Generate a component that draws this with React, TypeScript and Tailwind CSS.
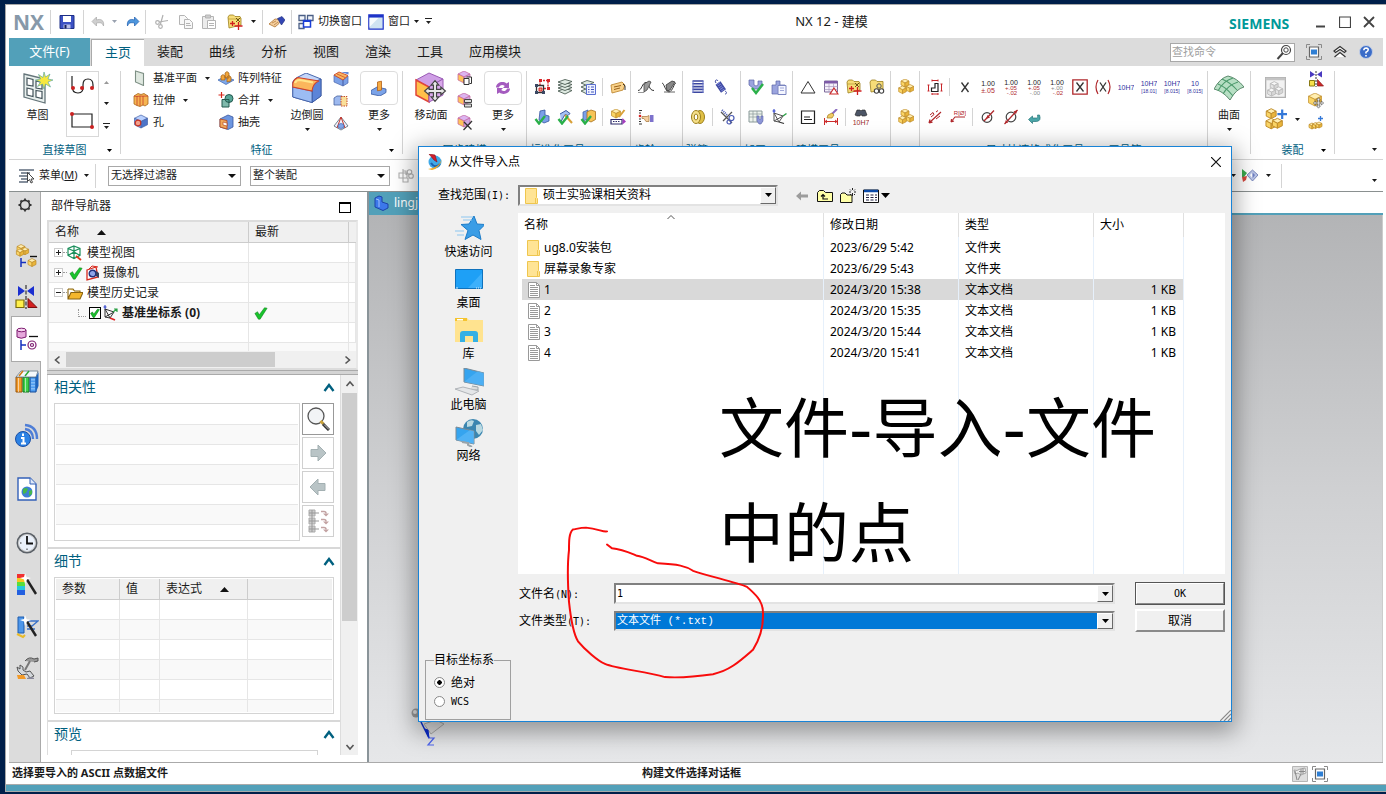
import React from "react";
import type { ReactNode } from "react";
import clsx from "clsx";

/* ---------- drawing helpers ---------- */

function Svg({ children, box = "0 0 16 16", className = "size-4" }: { children: ReactNode; box?: string; className?: string }) {
  return (
    <svg viewBox={box} className={clsx("shrink-0", className)} fill="none" aria-hidden="true">
      {children}
    </svg>
  );
}

const Caret = ({ className = "" }: { className?: string }) => (
  <Svg box="0 0 5 3" className={clsx("h-[3px] w-[5px]", className)}>
    <path d="M0 0h5L2.500 3z" fill="currentColor" />
  </Svg>
);

const OverflowCaret = () => (
  <Svg box="0 0 7 7" className="h-[7px] w-[7px]">
    <path d="M0 .5h7" stroke="#222" />
    <path d="M1 3h5L3.500 6z" fill="#222" />
  </Svg>
);

const Sep = ({ className = "h-6" }: { className?: string }) => <div className={clsx("w-px shrink-0 bg-[#d4d4d4]", className)} />;

/* isometric box: x,y is the top corner, r the half width */
function Cube({ x, y, r, t, l, f, s }: { x: number; y: number; r: number; t: string; l: string; f: string; s: string }) {
  const h = r / 2;
  return (
    <g stroke={s} strokeWidth="0.700" strokeLinejoin="round">
      <path d={`M${x} ${y}l${r} ${h}l${-r} ${h}l${-r} ${-h}z`} fill={t} />
      <path d={`M${x - r} ${y + h}l${r} ${h}v${r}l${-r} ${-h}z`} fill={l} />
      <path d={`M${x + r} ${y + h}l${-r} ${h}v${r}l${r} ${-h}z`} fill={f} />
    </g>
  );
}

const Gold = (p: { x: number; y: number; r: number }) => <Cube {...p} t="#ffeeb0" l="#fad566" f="#e9b53c" s="#bf8d2a" />;
const Blue = (p: { x: number; y: number; r: number }) => <Cube {...p} t="#b8d0ff" l="#7ba4ec" f="#4d74c8" s="#4562a8" />;
const Violet = (p: { x: number; y: number; r: number }) => <Cube {...p} t="#dcb4f0" l="#ffc45a" f="#d0a8e4" s="#c2609e" />;

const Move = ({ x, y, k = 1 }: { x: number; y: number; k?: number }) => (
  <path
    transform={`translate(${x} ${y}) scale(${k})`}
    d="M0-8l3 3.500H1.200v3.300h3.300V-3L8 0 4.500 3V1.200H1.200v3.300H3L0 8l-3-3.500h1.800V1.200h-3.300V3L-8 0l3.500-3v1.800h3.300v-3.300H-3z"
    fill="#e8e8e8"
    stroke="#444"
    strokeWidth="0.900"
  />
);
const Tick = ({ c = "#2ab04a" }: { c?: string }) => <path d="M1.500 10l3.500 4.500L11 7" stroke={c} strokeWidth="2.400" />;

/* small text used inside dimension glyphs */
const T = ({ x, y, c, s = 6, children }: { x: number; y: number; c: string; s?: number; children: string }) => (
  <text x={x} y={y} fill={c} fontSize={s} fontFamily="Liberation Sans, sans-serif" textAnchor="middle">
    {children}
  </text>
);

const icons: Record<string, ReactNode> = {
  save: (
    <>
      <path d="M1 1.500h14v13H1z" fill="#3c52c4" stroke="#1d2e86" />
      <path d="M4 2h8v6H4z" fill="#fff" />
      <path d="M4.500 10.500h7v4h-7z" fill="#b9c0e8" />
      <path d="M5.500 11h2v3.500h-2z" fill="#16205c" />
    </>
  ),
  undo: <path d="M2 8.500l4.500-4.500v3c4-1.500 8 0 7 6-1-3.300-3-3.700-7-3v3z" fill="#cfcfcf" stroke="#a9a9a9" strokeWidth="0.700" transform="translate(0 -1)" />,
  redo: <path d="M14 8.500L9.500 4v3c-4-1.500-8 0-7 6 1-3.300 3-3.700 7-3v3z" fill="#4e96dc" stroke="#1f5fb0" strokeWidth="0.700" transform="translate(0 -1)" />,
  cut: (
    <g stroke="#b0b0b0" strokeWidth="1.200">
      <path d="M9 1L6.500 10M14 6.500L5 8" />
      <circle cx="3.500" cy="8.500" r="1.800" />
      <circle cx="6.500" cy="12.500" r="1.800" />
    </g>
  ),
  copy: (
    <g stroke="#b4b4b4" fill="#f8f8f8">
      <path d="M1.500 1.500h5l3 3v6h-8z" />
      <path d="M6.500 5.500h5l3 3v6h-8z" />
      <path d="M8 9.500h4M8 11.500h5" />
    </g>
  ),
  paste: (
    <g stroke="#b4b4b4" fill="#ececec">
      <path d="M1.500 2.500h11v12h-11z" />
      <path d="M4.500 1h5v3h-5z" fill="#ccc" />
      <path d="M6.500 6.500h8v8h-8zM8 9.500h5M8 11.500h5" fill="#fff" />
    </g>
  ),
  folderStar: (
    <>
      <path d="M1 3l1.500-2h4L8 2.500h5l1 2V11L2 14z" fill="#f7dd78" stroke="#9c7f1c" strokeWidth="0.800" />
      <path d="M1 5h10l3-1" stroke="#b2932e" strokeWidth="0.700" />
      <path d="M9 4l4 4M13 4L9 8" stroke="#6b5412" />
      <path d="M11.500 8v8M7.500 12h8M5.500 7v5M3 9.500h5" stroke="#d01f1f" strokeWidth="1.300" />
    </>
  ),
  eraser: (
    <>
      <path d="M0 10l6-5 5 .5-1 4-4 3.500z" fill="#f4cfa0" stroke="#b0742e" strokeWidth="0.800" />
      <path d="M3 9l4-2M5 11l4-3" stroke="#b0742e" strokeWidth="0.700" />
      <path d="M8.500 4.500L13 2.500l3 3.500-3.500 5z" fill="#3346b4" stroke="#1b2a78" strokeWidth="0.600" />
    </>
  ),
  windows: (
    <>
      <path d="M1 1.500h6v5H1zM9.500 1.500H15v5H9.500zM1 9.500h5v5H1z" stroke="#4b5f86" strokeWidth="1.300" fill="#f3f6fb" />
      <path d="M5.500 6.500h7v6.500h-7z" fill="#fff" stroke="#1b3fd6" strokeWidth="1.500" />
      <path d="M5.500 7.500h7" stroke="#1b3fd6" />
    </>
  ),
  window: (
    <>
      <path d="M.8.800h14.400v14.400H.8z" fill="#cfe3f2" stroke="#1e33c8" strokeWidth="1.200" />
      <path d="M1 1h14v2.500H1z" fill="#1e33c8" />
      <path d="M1.500 4h9l-9 9z" fill="#fff" opacity=".8" />
    </>
  ),
  plane: <path d="M2.500 1l8 2.500v12L2.500 12z" fill="#dfe8e0" stroke="#7d8f84" strokeWidth="1.100" />,
  extrude: (
    <g stroke="#a8671c" strokeWidth="0.800">
      <path d="M1 4l4-2.500 3 1 3-1L15 4v8l-3 2-2-1-3 1.500-3-1L1 12z" fill="#f6b552" />
      <path d="M4 4.500v9M7 4v10M10 4v9M1 4l3 .5 3-.5 3 .2 5-.2" stroke="#c7402c" fill="none" />
    </g>
  ),
  hole: (
    <>
      <Blue x={8} y={1} r={6.500} />
      <circle cx="5" cy="9" r="2.800" fill="#f3a08c" stroke="#c93322" strokeWidth="1.200" />
    </>
  ),
  pattern: (
    <>
      <path d="M0 10l7-3.500L16 10l-8 4.500z" fill="#7ea9ec" stroke="#3b63ad" strokeWidth="0.700" />
      <path d="M3 10V6l2-1.500L7 6v4zM7 8V3l2-1.500L11 3v5zM9 12V7l2-1.500L13 7v4z" fill="#f3a63c" stroke="#9d5f14" strokeWidth="0.700" />
    </>
  ),
  unite: (
    <>
      <path d="M3.500 0v6M.5 3h6" stroke="#d6281c" strokeWidth="1.200" />
      <path d="M4 7.500h7V15H4z" fill="#7fb9ac" stroke="#23584e" />
      <circle cx="11" cy="6.500" r="4" fill="#56a596" stroke="#23584e" />
      <path d="M7.500 7.500h3.500v3" stroke="#23584e" />
    </>
  ),
  shell: (
    <>
      <path d="M2 5l8-4 5 2v10l-5 2.500-8-2.500z" fill="#6d96e0" stroke="#39559e" strokeWidth="0.800" />
      <path d="M2 5l7 1.500v8.500L2 13z" fill="#f0a95c" stroke="#b84b22" strokeWidth="0.900" />
      <path d="M5 8l4 1v3l-4-1z" fill="#fff" stroke="#b84b22" strokeWidth="0.700" />
    </>
  ),
  chamfer: (
    <>
      <path d="M1 4v7l9 4V9zM10 9l5-4v7l-5 3z" fill="#7ba0e6" stroke="#4a66ac" strokeWidth="0.700" />
      <path d="M1 4l5-3 9 3.500L10 9z" fill="#f9b65e" stroke="#cc4a2a" strokeWidth="0.900" />
      <path d="M4 3l8 3.500" stroke="#cc4a2a" strokeWidth="0.800" />
      <path d="M8 1h7.500v2.500z" fill="#5f87d8" />
    </>
  ),
  thread: (
    <>
      <path d="M1 5l3-2h5v9H1z" fill="#9db9ef" stroke="#48629f" strokeWidth="0.800" />
      <path d="M8 3.500h6v9.500H8z" fill="#fadf9a" stroke="#c34a2a" strokeDasharray="1.500 1" />
    </>
  ),
  draft: (
    <>
      <path d="M8 2L1 11l7 4 7-4z" fill="#eef3fd" stroke="#567" strokeWidth="0.800" />
      <path d="M8 2L4 13M8 2l4 11" stroke="#c8352a" />
      <ellipse cx="8" cy="11" rx="3" ry="2.500" fill="#7fa5ea" stroke="#39559e" strokeWidth="0.600" />
    </>
  ),
  faceCopy: (
    <>
      <Violet x={7} y={0} r={6} />
      <path d="M7 7.500h5v6H7zM9.500 6h5v6.500h-2" fill="#fff" stroke="#333" />
    </>
  ),
  faceSize: (
    <>
      <Violet x={7} y={0} r={6} />
      <path d="M7.500 6.500h7v3h-7zM7.500 11h7v3h-7z" fill="#ddd" stroke="#444" />
    </>
  ),
  faceDelete: (
    <>
      <Violet x={7} y={0} r={6} />
      <path d="M7 7l7.500 7.500M15 6l-8.500 9" stroke="#333" strokeWidth="1.300" />
    </>
  ),
  moreFeature: (
    <>
      <path d="M0 10.500L6 7l9 2v3.500L9 16l-9-2z" fill="#7ba3e8" stroke="#36579f" strokeWidth="0.800" />
      <path d="M6.500 2l4-.8V10l-4 .8z" fill="#f6ab42" stroke="#b35e14" strokeWidth="0.800" />
    </>
  ),
  sync: (
    <g fill="#a45bbf">
      <path d="M1 7.500c0-5 7-7 10.500-4L14 2v6H8l1.800-2C7.500 4 4.500 5 4 7.500z" />
      <path d="M15 8.500c0 5-7 7-10.500 4L2 14V8h6l-1.800 2c2.300 2 5.300 1 5.800-1.500z" />
    </g>
  ),
  frames: (
    <>
      <path d="M6 1.500h8v8H6z" stroke="#d8262a" strokeDasharray="2 1" strokeWidth="1.400" />
      <path d="M2.500 6.500h7v7h-7z" fill="#fff" stroke="#333" strokeWidth="1.300" />
      <path d="M5 9h3v3H5z" fill="#f4a37e" stroke="#d8262a" />
      <path d="M1 5h3v3H1zM8 12h3v3H8zM1 12h3v3H1z" fill="#3b4864" />
      <path d="M13 0h3v3h-3zM13 8h3v3h-3zM5 0h3v3H5z" fill="#d8262a" />
    </>
  ),
  layers: (
    <g fill="#dfeae2" stroke="#4d5f55" strokeWidth="0.900">
      <path d="M8 9.500l7 2L8 15l-7-3z" />
      <path d="M8 6.500l7 2-7 3-7-2.500z" />
      <path d="M8 3.500l7 2-7 3L1 6z" />
      <path d="M8 .5l7 2-7 3L1 3z" />
    </g>
  ),
  layerList: (
    <>
      <g fill="#dfeae2" stroke="#4d5f55" strokeWidth="0.900">
        <path d="M7 9.500l6 2L7 15l-6-3z" />
        <path d="M7 5.500l6 2-6 3-6-2.500z" />
        <path d="M7 1.500l7 2-7 3L1 4z" />
      </g>
      <path d="M6.500 5.500h9v10h-9z" fill="#eef2ff" stroke="#5a6fd0" />
      <path d="M8 8h1.500M11 8h3M8 10.500h1.500M11 10.500h3M8 13h1.500M11 13h3" stroke="#4456bc" />
    </>
  ),
  tag: (
    <>
      <path d="M1 6l11-3 3 3-2 5-11 3z" fill="#f9d28a" stroke="#c08a35" strokeWidth="0.900" />
      <path d="M4 8l7-1.500M4 10.500l6-1.500" stroke="#99611a" />
      <path d="M13 5q3 1 2 6" stroke="#333" />
    </>
  ),
  partTick: (
    <>
      <path d="M6 2l5-1v5l4 1v5l-5 2-5-3z" fill="#7ba0e8" stroke="#36579f" strokeWidth="0.800" />
      <Tick />
    </>
  ),
  hammerTick: (
    <>
      <path d="M3 5l6-3.500 4 3-2 2-3-1-4 7" fill="#a6c0f3" stroke="#3b57a3" />
      <path d="M8 6l7 8" stroke="#d9a13a" strokeWidth="2" />
      <Tick />
    </>
  ),
  boxTick: (
    <>
      <path d="M3 3l5-2v9l-5 2z" fill="#7ba0e8" stroke="#36579f" strokeWidth="0.700" />
      <path d="M7 3l4-2 4.500 1.500v8L11 13l-4-2z" fill="#f6c356" stroke="#a8701c" strokeWidth="0.800" />
      <Tick />
    </>
  ),
  rename: (
    <>
      <Gold x={6} y={0} r={4.500} />
      <path d="M14.500 1L9 8" stroke="#d9a13a" strokeWidth="2" />
      <path d="M1 10.500h11v4.500H1z" fill="#fff" stroke="#2e2c6c" strokeWidth="1.200" />
      <path d="M3 12.500h7" stroke="#2e2c6c" strokeDasharray="1.500 1" />
      <path d="M12.500 9l3.500 3.500-3.500 3z" fill="#a63cc0" />
    </>
  ),
  gearA: (
    <>
      <path d="M0 11.500c4 0 4-8 8-8s2 8 8 8" stroke="#333" />
      <path d="M6 5l5-3 2 1-4 8-3 2z" fill="#999" stroke="#444" strokeWidth="0.800" />
      <path d="M0 13.500h6" stroke="#999" />
    </>
  ),
  gearB: (
    <>
      <path d="M1 4c2 0 3 8 7 9 4-1 5-9 7-9" stroke="#333" />
      <path d="M5 6l6-4 3 1-5 8-3 1z" fill="#888" stroke="#333" strokeWidth="0.800" />
      <path d="M3 13h11" stroke="#666" />
    </>
  ),
  pointer: (
    <>
      <path d="M1 1.500h3M1 4h2M1 10h2M1 12.500h2M1 15h3" stroke="#333" />
      <circle cx="2" cy="7" r="1.300" fill="#d22" />
      <path d="M4 7.500h5l2-1v6H8L6 9.500H4z" fill="#f4cfa0" stroke="#a3723a" strokeWidth="0.700" />
      <path d="M12 6h3.500v7H12z" fill="#7d72cc" />
    </>
  ),
  spring: (
    <g stroke="#3b46a0" strokeWidth="1.600">
      <path d="M2.500 2h11M2.500 4.800h11M2.500 7.600h11M2.500 10.400h11M2.500 13.200h11" />
      <path d="M3 2v12M13 2v12" strokeWidth="1" stroke="#6b76c8" />
    </g>
  ),
  springTilt: (
    <>
      <path d="M5 4l5.500 8" stroke="#3b46a0" strokeWidth="6" />
      <path d="M5 4l5.500 8" stroke="#7a84d4" strokeWidth="4" strokeDasharray="1 1" />
      <path d="M3 4C1 1 4 0 5 2M12 12c2 1 2 3 0 3" stroke="#3b46a0" />
    </>
  ),
  coil: (
    <>
      <ellipse cx="10" cy="8" rx="4.500" ry="6.500" fill="#e0c046" stroke="#9c7f1c" />
      <ellipse cx="6" cy="8" rx="4.500" ry="6.500" fill="#f6e08a" stroke="#9c7f1c" />
      <ellipse cx="6" cy="8" rx="1.800" ry="3" fill="#fff" stroke="#9c7f1c" />
    </>
  ),
  springCut: (
    <>
      <path d="M1 3l11 11M3 12L12 3" stroke="#555" strokeWidth="1.300" />
      <circle cx="11.500" cy="9" r="2.500" stroke="#4b5bb4" strokeWidth="1.200" />
      <circle cx="9" cy="13" r="2" stroke="#4b5bb4" strokeWidth="1.200" />
      <path d="M2 1l5 5" stroke="#4b5bb4" strokeWidth="2" strokeDasharray="1 1" />
    </>
  ),
  toolTick: (
    <>
      <path d="M1 1h5v5l2 1 2-1V2h4v4l-4 4H6L1 6z" fill="#9ba4de" stroke="#5a64a8" strokeWidth="0.700" />
      <path d="M4 9l4 5 7-9" stroke="#2ab04a" strokeWidth="2.500" />
    </>
  ),
  toolSheet: (
    <>
      <path d="M1 6h4V2h4v4h5v9H1z" fill="#9ba4de" stroke="#5a64a8" strokeWidth="0.700" />
      <path d="M7 6.500h8v9H7z" fill="#f4f6ff" stroke="#7a84c0" />
      <path d="M9 9h4M9 11.500h4" stroke="#a0a8d8" />
    </>
  ),
  gridTool: (
    <>
      <path d="M1 2h13v11H1z" fill="#edf3ed" stroke="#8a9a9a" />
      <path d="M1 5h13M1 8h13M5 2v11M9 2v11" stroke="#8a9a9a" strokeWidth="0.700" />
      <path d="M9 7h2v3h2V7h2v5l-2 3h-2l-2-3z" fill="#8d96d8" stroke="#5a64a8" strokeWidth="0.600" />
    </>
  ),
  csys: (
    <>
      <path d="M3 4l9 3-4 6zM3 4v8l5 1M3 12l9-5" stroke="#555" />
      <path d="M3 4V0M1.500 2h3" stroke="#2337c8" />
      <path d="M12 7l3.500-2.500" stroke="#2aa044" strokeWidth="1.400" />
      <path d="M8 13l5 1.500" stroke="#333" strokeWidth="1.200" />
    </>
  ),
  csysRed: (
    <>
      <path d="M3 4l9 3-4 6zM3 4v8l5 1M3 12l9-5" stroke="#333" />
      <path d="M3 4V0M1.500 2h3" stroke="#2337c8" />
      <path d="M11 7l4-3M12 4h3v3" stroke="#2aa044" strokeWidth="1.200" />
      <path d="M8 13l5 2" stroke="#d22" strokeWidth="1.600" />
    </>
  ),
  triangle: <path d="M8 2.500L15 14H1z" stroke="#333" />,
  tableTri: (
    <>
      <path d="M1.500 2h13v11h-13z" fill="#f4f0fa" stroke="#7d6b9a" />
      <path d="M1.500 2h13v2.500h-13z" fill="#7d5aa8" />
      <path d="M1.500 7.500h13M1.500 10.500h13M6 4v9M10.500 4v9" stroke="#a99abf" strokeWidth="0.700" />
      <path d="M11 9l4 6H7z" fill="#fff" stroke="#cc2a2a" strokeWidth="1.200" />
    </>
  ),
  folderGear: (
    <>
      <path d="M1 3l1.500-2h4L8 2.500h6V11L2 13z" fill="#f7dd78" stroke="#9c7f1c" strokeWidth="0.800" />
      <circle cx="10" cy="7" r="2.200" fill="#f7dd78" stroke="#555" />
      <circle cx="7.500" cy="12" r="2.200" fill="#fff" stroke="#444" strokeWidth="1.100" />
      <circle cx="12.500" cy="12" r="2.200" fill="#fff" stroke="#444" strokeWidth="1.100" />
    </>
  ),
  note: (
    <>
      <path d="M1.500 2h13v12.500h-13z" stroke="#222" strokeWidth="1.200" />
      <path d="M4 8h6M4 10.500h8" stroke="#222" />
    </>
  ),
  brushDim: (
    <>
      <path d="M14 0L9 5" stroke="#8b6cc0" strokeWidth="2" />
      <path d="M5 6l4-2 2 2-2 3H4z" fill="#f0cc66" stroke="#a57a1c" strokeWidth="0.700" />
      <path d="M1.500 9v7M14.500 9v7M2 12.500h12M4 11l-2 1.500L4 14M12 11l2 1.500-2 1.500" stroke="#cc2a2a" />
    </>
  ),
  binoc: (
    <>
      <path d="M2 6l2-5h3l1 1 1-1h3l2 5-2 1H9l-1-2-1 2H4z" fill="#4c5566" stroke="#222" strokeWidth="0.600" />
      <T x={8} y={15.500} c="#9b2a2a" s={7}>10H7</T>
    </>
  ),
  blocks: (
    <>
      <Gold x={7} y={0} r={4} />
      <Gold x={12} y={5.500} r={3.800} />
      <Gold x={4.500} y={7} r={3.800} />
    </>
  ),
  dimShape: (
    <>
      <path d="M8 4.500h3v8H4.500V9H8z" stroke="#222" strokeWidth="1.200" />
      <path d="M5 1.500h6M5 15h6M1.500 6v6M14.500 5v7M5 .5v2M11 .5v2M.5 6h2M.5 12h2M13.500 5h2M13.500 12h2M5 14v2M11 14v2" stroke="#c8262a" />
    </>
  ),
  xPlain: <path d="M4.500 3.500l7 9.500M11.500 3.500l-7 9.500" stroke="#333" strokeWidth="1.300" />,
  xBox: (
    <>
      <path d="M.8.800h14.400v14.400H.8z" stroke="#b0282c" strokeWidth="1.300" />
      <path d="M4.500 3.500l7 9M11.500 3.500l-7 9" stroke="#333" strokeWidth="1.300" />
    </>
  ),
  xParen: (
    <>
      <path d="M3 1Q-1 8 3 15M13 1q4 7 0 14" stroke="#b0282c" strokeWidth="1.200" />
      <path d="M5 3.500l6 9M11 3.500l-6 9" stroke="#333" strokeWidth="1.300" />
    </>
  ),
  tol1: (<><T x={8} y={7} c="#222" s={7}>1.00</T><T x={8} y={14} c="#b0282c" s={7}>±.05</T></>),
  tol2: (<><T x={8} y={6} c="#222" s={7}>1.00</T><T x={8} y={11} c="#b0282c" s={6}>+.05</T><T x={9} y={16} c="#b0282c" s={6}>-.02</T></>),
  tol3: (<><T x={8} y={6} c="#222" s={7}>1.00</T><T x={8} y={11} c="#b0282c" s={6}>+.05</T><T x={9} y={16} c="#888" s={6}>-.00</T></>),
  tol4: (<><T x={8} y={6} c="#222" s={7}>1.00</T><T x={8} y={11} c="#888" s={6}>+.00</T><T x={9} y={16} c="#b0282c" s={6}>-.02</T></>),
  fit1: <T x={8} y={11} c="#3030a0" s={7}>10H7</T>,
  fit2: (<><T x={8} y={6.500} c="#3030a0" s={7}>10H7</T><T x={8} y={14} c="#3030a0" s={5}>[18.01]</T></>),
  fit3: (<><T x={8} y={6.500} c="#3030a0" s={7}>10H7</T><T x={8} y={14} c="#3030a0" s={5}>[8.015]</T></>),
  fit4: (<><T x={8} y={6.500} c="#3030a0" s={7}>10</T><T x={8} y={14} c="#3030a0" s={5}>[8.015]</T></>),
  radius: (
    <>
      <path d="M2 14L14 3M2 14l1-3.500M2 14l3.500-.8" stroke="#b0282c" strokeWidth="1.200" />
      <path d="M3 6l3-2.500 1 2-3 2.500M9 3l2-1.500M9 10l4-3" stroke="#b0282c" />
    </>
  ),
  leader: (
    <>
      <path d="M1 13l4-5h10M1 13l.5-3M1 13l3-1" stroke="#b0282c" strokeWidth="1.100" />
      <T x={10} y={6} c="#b0282c" s={6}>R[Ø]</T>
    </>
  ),
  dia: (
    <>
      <circle cx="7" cy="8.500" r="4.800" stroke="#444" strokeWidth="1.200" />
      <path d="M4 12L14 1.500" stroke="#b0282c" strokeWidth="1.300" />
      <path d="M6 10l1.500-4L10 8.500z" fill="#b0282c" />
    </>
  ),
  dia2: (
    <>
      <circle cx="8" cy="8" r="4.800" stroke="#444" strokeWidth="1.200" />
      <path d="M1.500 15L14.500 1" stroke="#b0282c" strokeWidth="1.200" />
      <path d="M2 14.500l.8-3.500 2.500 2.500zM14.500 1L10.500 2.500 13 5z" fill="#b0282c" />
    </>
  ),
  back: <path d="M2.500 10.500l4-3.500v2h4q2 0 1-3h2q2 6-3 6.500h-4v2z" fill="#4aa5a8" stroke="#27777a" strokeWidth="0.700" />,
  assemblyOff: (
    <>
      <path d="M.5.500h15v15H.5z" fill="#f2f2f2" stroke="#b0b0b0" />
      <path d="M.5.500h15v2H.5z" fill="#c4c4c4" />
      <Cube x={7} y={3.500} r={3} t="#f8f8f8" l="#e4e4e4" f="#d6d6d6" s="#bbb" />
      <Cube x={10.500} y={7.500} r={3} t="#f8f8f8" l="#e4e4e4" f="#d6d6d6" s="#bbb" />
      <Cube x={5} y={8.500} r={3} t="#f8f8f8" l="#e4e4e4" f="#d6d6d6" s="#bbb" />
    </>
  ),
  assemblyAdd: (
    <>
      <Gold x={4.500} y={0.500} r={3.600} />
      <Gold x={4.500} y={7.500} r={3.800} />
      <Gold x={9} y={7.500} r={3.600} />
      <path d="M12.500 1v7M9 4.500h7" stroke="#3478d8" strokeWidth="1.600" />
    </>
  ),
  mirror: (
    <>
      <path d="M2 0l5 3.500V0 6 3.500L2 6.500zM14 0L9 3.500 14 6.500z" fill="#4a3ac0" />
      <path d="M8 0v16" stroke="#333" strokeDasharray="2 1" />
      <path d="M1.500 9.500h5V15h-5z" fill="#f6e04a" stroke="#8a7a14" />
      <path d="M9.500 8.500L15.500 15h-6z" fill="#cc2a2a" stroke="#8a1616" strokeWidth="0.700" />
    </>
  ),
  moveComp: (
    <>
      <Gold x={7} y={0} r={6.500} />
      <Move x={10.500} y={10} k={0.650} />
    </>
  ),
  addRow: (
    <>
      <Gold x={4} y={8} r={3} />
      <Gold x={7.500} y={7.500} r={3} />
      <Gold x={11} y={7} r={3} />
      <path d="M12.500 1v5M10 3.500h5" stroke="#3478d8" strokeWidth="1.300" />
    </>
  ),
  menuIcon: (
    <>
      <path d="M0 2h15M2 5h9M0 8h8M2 11h7M0 14h9" stroke="#5d6b7c" strokeWidth="1.300" />
      <path d="M8.500 4.500v9l2-2 1.500 3.500 1.500-.7L12 11h3z" fill="#fff" stroke="#333" strokeWidth="0.900" />
    </>
  ),
  linkOff: (
    <g stroke="#b0b0b0" strokeWidth="1.100">
      <path d="M1 5h8v5H1zM5 1v13h5v-4M5 5V3h3v4" />
      <circle cx="11.500" cy="4" r="2.300" />
      <circle cx="13" cy="8" r="2.300" />
    </g>
  ),
  snap: (
    <>
      <path d="M0 1l5 4-3 4H0z" fill="#3aa84e" />
      <path d="M0 9l5-1-1 4-3 2z" fill="#d4473e" />
      <path d="M5 7l5.500-5L16 7l-5.500 6z" fill="#b9c4e6" stroke="#6573ae" strokeWidth="0.800" />
      <path d="M8 7l2.500-2.500v6z" fill="#fff" />
      <path d="M10.500 4.500L13 7l-2.500 3.500z" fill="#6f80c4" />
    </>
  ),
  fullscreen: (
    <>
      <path d="M.5 4V.5H4M12 .5h3.500V4M15.500 12v3.500H12M4 15.500H.5V12" stroke="#8a8a8a" />
      <path d="M3.500 3h9v10h-9z" fill="#fff" stroke="#666" strokeWidth="1.200" />
      <path d="M5 5.500h6v5H5z" fill="#2f7fd4" />
    </>
  ),
  flagOff: (
    <>
      <path d="M.5.500h15v15H.5z" fill="#dedede" stroke="#b6b6b6" />
      <path d="M2 4l3 .5L8 3l5-1 1 5-5 2-3-2-3 1z" fill="#efefef" stroke="#999" strokeWidth="0.800" />
      <path d="M9 3v5M11 2.500V8M7 5.500h6M5 14L3 5M6 14l3-6" stroke="#888" />
    </>
  ),
};

const Icon = ({ n, className }: { n: string; className?: string }) => <Svg className={className}>{icons[n]}</Svg>;

/* ---------- title bar ---------- */

function TitleBar() {
  return (
    <header className="flex h-[33px] items-center">
      <div className="w-[41px] shrink-0 pl-1 font-['Open_Sans'] text-[21px] leading-6 font-bold text-[#8799a9]">NX</div>
      <Sep />
      <button aria-label="保存" className="flex w-8 justify-center"><Icon n="save" /></button>
      <Sep />
      <button aria-label="撤销" className="flex w-7 justify-center"><Icon n="undo" /></button>
      <Caret className="mr-1 text-gray-400" />
      <button aria-label="重做" className="flex w-6 justify-center"><Icon n="redo" /></button>
      <Sep />
      <button aria-label="剪切" className="ml-1 flex w-6 justify-center"><Icon n="cut" /></button>
      <button aria-label="复制" className="flex w-[23px] justify-center"><Icon n="copy" /></button>
      <button aria-label="粘贴" className="flex w-6 justify-center"><Icon n="paste" /></button>
      <button aria-label="新建特征" className="flex w-7 justify-center"><Icon n="folderStar" /></button>
      <Caret className="mr-1.5 ml-0.5" />
      <Sep />
      <button aria-label="橡皮擦" className="flex w-7 justify-center"><Icon n="eraser" /></button>
      <Sep />
      <button className="flex items-center gap-1 pl-1.5"><Icon n="windows" />切换窗口</button>
      <button className="flex items-center gap-1 pl-1.5"><Icon n="window" />窗口<Caret /></button>
      <button aria-label="更多工具" className="pl-1.5"><OverflowCaret /></button>
      <h1 className="flex-1 pl-0.5 text-center text-[13px]">NX 12 - 建模</h1>
      <div className="w-[86px] pt-1 font-['Open_Sans'] text-sm leading-5 font-bold text-[#009999]">SIEMENS</div>
      <button aria-label="最小化" className="w-6"><Svg box="0 0 12 12" className="size-3"><path d="M1 10.500h9" stroke="#444" strokeWidth="2" /></Svg></button>
      <button aria-label="最大化" className="w-6"><Svg box="0 0 12 12" className="size-3"><path d="M.5 1h11v10.500H.5z" stroke="#444" strokeWidth="1.200" /></Svg></button>
      <button aria-label="关闭" className="w-5"><Svg box="0 0 12 12" className="size-3"><path d="M1 1l10 10M11 1L1 11" stroke="#444" strokeWidth="1.800" /></Svg></button>
    </header>
  );
}

const tabs = ["装配", "曲线", "分析", "视图", "渲染", "工具"];

function TabBar() {
  return (
    <nav className="flex h-7 items-center bg-[#dcdcdc] text-[13px]">
      <button className="h-7 w-[81px] bg-[#52a0b9] text-white">文件(F)</button>
      <button className="mt-px ml-px h-[27px] w-[53px] border-t border-l border-[#aaa] bg-white text-[#00607f]">主页</button>
      {tabs.map((t) => (
        <button key={t} className="w-[52px]">{t}</button>
      ))}
      <button className="w-[78px]">应用模块</button>
      <div className="flex-1" />
      <label className="flex h-[19px] w-[125px] items-center border border-[#a8a8a8] bg-white">
        <input aria-label="查找命令" placeholder="查找命令" className="w-full min-w-0 bg-transparent pl-px text-[11px] outline-none placeholder:text-[#a0a0a0]" />
        <Svg className="mr-0.5 size-4">
          <circle cx="10" cy="6" r="4.500" stroke="#444" strokeWidth="1.200" />
          <circle cx="10" cy="6" r="2.200" stroke="#444" />
          <path d="M7 9l-5.500 6" stroke="#444" strokeWidth="2" />
        </Svg>
      </label>
      <button aria-label="全屏" className="ml-[11px]"><Icon n="fullscreen" /></button>
      <button aria-label="最小化功能区" className="ml-2.5">
        <Svg><path d="M2 7l6-4.500L14 7l-1.500 1.500L8 5.500 3.500 8.500zM2.500 13L8 8.500l5.500 4.500" stroke="#333" strokeWidth="1.200" fill="#fff" /></Svg>
      </button>
      <button aria-label="帮助" className="mr-[9px] ml-2.5">
        <Svg>
          <circle cx="8" cy="8" r="6.500" fill="#3a6cc8" stroke="#c3cfe6" />
          <path d="M5.800 6.200Q6 4 8.200 4q2.200.2 2 2Q10 7.300 8 8.300v1.200M8 11v1.500" stroke="#fff" strokeWidth="1.600" />
        </Svg>
      </button>
    </nav>
  );
}

/* ---------- ribbon ---------- */

function Group({ w, label, children, menu = true, start }: { w: string; label?: string; children: ReactNode; menu?: boolean; start?: boolean }) {
  return (
    <>
      <section className={clsx("flex h-[88px] shrink-0 flex-col", w)}>
        <div className="flex h-[70px] shrink-0">{children}</div>
        <div className={clsx("relative flex h-[18px] items-center pt-px whitespace-nowrap text-[#00607f]", start ? "pl-[3px]" : "justify-center")}>
          {label}
          {menu && <Caret className="absolute right-2 text-black" />}
        </div>
      </section>
      <Sep className="h-[83px]" />
    </>
  );
}

function BigButton({ label, art, menu, w, boxed }: { label: string; art: ReactNode; menu?: boolean; w: string; boxed?: boolean }) {
  return (
    <button className={clsx("flex shrink-0 flex-col items-center", w)}>
      <span className={clsx("flex h-[34px] items-center justify-center", boxed && "w-[38px] rounded border border-[#ddd]")}>{art}</span>
      <span className="mt-0.5 leading-4">{label}</span>
      {menu && <Caret className="mt-[5px]" />}
    </button>
  );
}

const IconColumn = ({ names }: { names: string[] }) => (
  <div className="flex shrink-0 flex-col gap-1.5">
    {names.map((n) => (
      <button key={n} aria-label={n}><Icon n={n} /></button>
    ))}
  </div>
);

const Row = ({ n, label, menu }: { n: string; label: string; menu?: boolean }) => (
  <button className="flex h-[22px] items-center">
    <Icon n={n} />
    <span className="ml-1">{label}</span>
    {menu && <Caret className="ml-2" />}
  </button>
);

const IconGrid = ({ rows }: { rows: string[][] }) => (
  <div className="flex flex-col pt-px pl-[3px]">
    {rows.map((row, i) => (
      <div key={i} className="flex h-[30px] items-center">
        {row.map((n, j) =>
          n === "|" ? (
            <span key={j} className="flex w-[7px] justify-center"><Sep className="h-[18px]" /></span>
          ) : (
            <button key={j} aria-label={n} className="flex w-[23px] justify-center"><Icon n={n} /></button>
          ),
        )}
      </div>
    ))}
  </div>
);

const sketchArt = (
  <Svg box="0 0 30 32" className="h-8 w-[30px]">
    <path d="M1 2l21 5v24L1 25z" fill="#e9f0ee" stroke="#65757a" strokeWidth="1.300" />
    <path d="M4 6l6 1.500V14l-6-1zM13 9l6 1.500V17l-6-1zM4 16l6 1.500v7L4 23zM13 18.500l6 1v7L13 25z" fill="#fff" stroke="#43535a" strokeWidth="1.200" />
    <path d="M21 0l1.500 5L27 2l-2 5 5 1-5 2 2.500 5-5-3-1.500 5-1.500-5-5 2.500 3-4.500-5-2 5-1-2-4.500 4.500 3z" fill="#f7e83e" stroke="#4aa0a0" strokeWidth="0.600" />
  </Svg>
);

const edgeArt = (
  <Svg box="0 0 30 30" className="size-[30px]">
    <path d="M14 0l15 6v17l-9 6.500L.8 24V9Q2 6 5 4.500z" fill="#c4d6fa" stroke="#4866ac" />
    <path d="M20 16q0-7 9-10v17l-9 6.500z" fill="#5c84d8" stroke="#3b589f" strokeWidth="0.800" />
    <path d="M.8 14L20 18v11.500L.8 24z" fill="#9cbcf4" stroke="#3b589f" strokeWidth="0.800" />
    <path d="M.8 14V10q1.200-4 5-5.500L27 8q-6 2-7 10z" fill="#fbb65c" stroke="#cf3f2a" strokeWidth="1.100" />
    <path d="M3 10q1-3 5-3l13 2.500" stroke="#ffe58a" strokeWidth="2.200" />
  </Svg>
);

const moveArt = (
  <Svg box="0 0 32 32" className="size-8">
    <path d="M1 8L14 1l14 6-14 8z" fill="#cf9fe6" stroke="#9a5ab5" />
    <path d="M1 8l13 7v15L1 23z" fill="#ffc04a" stroke="#e0453a" strokeWidth="1.500" />
    <path d="M28 7l-14 8v15l14-7z" fill="#d9a8ea" stroke="#9a5ab5" />
    <Move x={20} y={19} k={1.300} />
  </Svg>
);

const surfaceArt = (
  <Svg box="0 0 30 26" className="h-[26px] w-[30px]">
    <path d="M0 14Q6 3 14 1q9 2 16 11-8 2-14 13Q9 16 0 14z" fill="#b7dfc4" stroke="#5c8a6d" />
    <path d="M4 9q8 3 15 12M8 4q9 4 15 11M4 16Q9 6 19 3M9 19q5-9 15-12" stroke="#4c9a6c" strokeWidth="1.100" />
  </Svg>
);

function Ribbon() {
  return (
    <div className="flex h-[93px] overflow-hidden pt-[5px]">
      <Group w="w-[111px]" label="直接草图">
        <BigButton w="w-[57px]" label="草图" art={sketchArt} />
        <button aria-label="曲线库" className="h-[66px] w-[33px] border border-[#d8d8d8]">
          <Svg box="0 0 31 64" className="h-16 w-[31px]">
            <path d="M5 4v10q0 7 6 7t5-8q0-6 5-6t5 6v3" stroke="#222" strokeWidth="1.200" />
            <path d="M5 42h20v13H5z" stroke="#222" strokeWidth="1.200" />
            <g fill="#cc2222"><circle cx="6" cy="16" r="2" /><circle cx="15" cy="16" r="2" /><circle cx="25" cy="16" r="2" /><circle cx="5" cy="42" r="2" /><circle cx="25" cy="55" r="2" /></g>
          </Svg>
        </button>
        <div className="flex flex-col items-center gap-[18px] pt-2.5 pl-1">
          <Caret className="rotate-180 text-[#999]" />
          <Caret />
          <OverflowCaret />
        </div>
      </Group>
      <Group w="w-[281px]" label="特征">
        <div className="ml-3 flex w-[85px] shrink-0 flex-col items-start">
          <div className="-mt-1"><Row n="plane" label="基准平面" menu /></div>
          <Row n="extrude" label="拉伸" menu />
          <Row n="hole" label="孔" />
        </div>
        <div className="flex w-[72px] shrink-0 flex-col items-start">
          <div className="-mt-1"><Row n="pattern" label="阵列特征" /></div>
          <Row n="unite" label="合并" menu />
          <Row n="shell" label="抽壳" />
        </div>
        <BigButton w="w-[34px]" label="边倒圆" art={edgeArt} menu />
        <div className="pl-[9px]"><IconColumn names={["chamfer", "thread", "draft"]} /></div>
        <div className="pl-[11px]"><BigButton w="w-[38px]" label="更多" art={<Icon n="moreFeature" />} menu boxed /></div>
      </Group>
      <Group w="w-[123px]" label="同步建模" menu={false}>
        <div className="pl-2.5"><BigButton w="w-[36px]" label="移动面" art={moveArt} /></div>
        <div className="pl-2"><IconColumn names={["faceCopy", "faceSize", "faceDelete"]} /></div>
        <div className="pl-[11px]"><BigButton w="w-[38px]" label="更多" art={<Icon n="sync" />} menu boxed /></div>
      </Group>
      <Group w="w-[103px]" label="标准化工具" menu={false} start>
        <IconGrid rows={[["frames", "layers", "layerList", "|", "tag"], ["partTick", "hammerTick", "boxTick", "|", "rename"]]} />
      </Group>
      <Group w="w-[51px]" label="齿轮..." menu={false} start>
        <IconGrid rows={[["gearA", "gearB"], ["pointer"]]} />
      </Group>
      <Group w="w-[57px]" label="弹簧" menu={false} start>
        <IconGrid rows={[["spring", "springTilt"], ["coil", "|", "springCut"]]} />
      </Group>
      <Group w="w-[51px]" label="加工..." menu={false} start>
        <IconGrid rows={[["toolTick", "toolSheet"], ["gridTool", "csys"]]} />
      </Group>
      <Group w="w-[97px]" label="建模工具" menu={false} start>
        <IconGrid rows={[["triangle", "tableTri", "folderStar", "folderGear"], ["note", "brushDim", "|", "binoc"]]} />
      </Group>
      <Group w="w-[28px]" menu={false}>
        <IconGrid rows={[["blocks"], ["blocks"]]} />
      </Group>
      <Group w="w-[287px]" label="尺寸快速格式化工具 - GC工具箱" menu={false}>
        <IconGrid
          rows={[
            ["dimShape", "|", "xPlain", "tol1", "tol2", "tol3", "tol4", "xBox", "xParen", "fit1", "fit2", "fit3", "fit4"],
            ["radius", "leader", "|", "dia", "dia2", "back"],
          ]}
        />
      </Group>
      <Group w="w-[42px]" menu={false}>
        <BigButton w="w-[42px]" label="曲面" art={surfaceArt} menu />
      </Group>
      <Group w="w-[83px]" label="装配">
        <div className="flex flex-col gap-2.5 pt-1.5 pl-3.5">
          <button aria-label="装配导航"><Icon n="assemblyOff" className="size-[21px]" /></button>
          <button aria-label="添加组件" className="flex items-center gap-2"><Icon n="assemblyAdd" className="size-[22px]" /><Caret /></button>
        </div>
        <div className="pl-2"><IconColumn names={["mirror", "moveComp", "addRow"]} /></div>
      </Group>
      <div className="flex flex-1 items-end justify-end pr-1.5 pb-2"><Caret /></div>
    </div>
  );
}

function FlatSelect({ label, value, className }: { label: string; value: string; className: string }) {
  return (
    <div className={clsx("relative", className)}>
      <select aria-label={label} className="h-5 w-full appearance-none border border-[#a8a8a8] bg-white pl-0.5 text-[11px]">
        <option>{value}</option>
      </select>
      <Svg box="0 0 8 4" className="pointer-events-none absolute top-2 right-[5px] h-1 w-2"><path d="M0 0h8L4 4z" fill="#111" /></Svg>
    </div>
  );
}

function SelectionBar() {
  return (
    <div className="flex h-[33px] items-center border-t border-b border-t-[#d4d4d4] border-b-[#8a9090]">
      <button className="flex w-[86px] items-center gap-1 pl-2.5">
        <Icon n="menuIcon" />
        <span>菜单(<u>M</u>)</span>
        <Caret className="ml-0.5" />
      </button>
      <Sep />
      <FlatSelect label="选择过滤器" value="无选择过滤器" className="ml-3 w-[133px]" />
      <FlatSelect label="选择范围" value="整个装配" className="ml-[9px] w-[140px]" />
      <Icon n="linkOff" className="ml-2 size-4" />
      <div className="flex-1" />
      <Caret />
      <button aria-label="捕捉点" className="ml-1.5 flex items-center gap-2"><Icon n="snap" /><Caret /></button>
      <Sep className="ml-2.5 h-6" />
      <div className="flex w-[101px] justify-end pt-2.5 pr-1.5"><Caret /></div>
    </div>
  );
}

/* ---------- resource bar ---------- */

const Res = ({ label, children, className = "h-[42px]" }: { label: string; children: ReactNode; className?: string }) => (
  <button aria-label={label} className={clsx("flex w-full shrink-0 items-center justify-center pl-1", className)}>
    <Svg box="0 0 24 24" className="size-6">{children}</Svg>
  </button>
);

const wand = (
  <>
    <path d="M11 5l10 16" stroke="#222" strokeWidth="2.400" />
    <path d="M10 0l1.500 4L16 5l-4 1.500L10 11 9 6.500 5 5l4-1z" fill="#fff" />
  </>
);

function ResourceBar() {
  return (
    <aside className="flex w-8 shrink-0 flex-col border-r border-[#aaa] bg-[#dcdcdc]">
      <button aria-label="设置" className="flex h-[25px] items-center justify-center">
        <Svg>
          <circle cx="8" cy="8" r="4.600" stroke="#333" strokeWidth="1.600" />
          <path d="M8 1.500v2M8 12.500v2M1.500 8h2M12.500 8h2M3.500 3.500l1 1M11.500 11.500l1 1M3.500 12.500l1-1M11.500 4.500l1-1" stroke="#333" strokeWidth="1.800" />
        </Svg>
      </button>
      <Res label="装配导航器" className="mt-[18px] h-[42px]">
        <Gold x={6} y={0.500} r={4} />
        <Gold x={10} y={3.500} r={3.600} />
        <Gold x={5} y={5} r={3.600} />
        <path d="M15 12.500h7" stroke="#111" strokeWidth="1.400" />
        <path d="M6 14v9M6 18.500h5" stroke="#1530c0" strokeWidth="1.500" />
        <Gold x={17} y={14.500} r={4} />
      </Res>
      <Res label="约束导航器" className="h-[39px]">
        <path d="M3 1l7 5-7 5zM19 1l-7 5 7 5z" fill="#1b2fd0" />
        <path d="M11 0v24" stroke="#111" strokeDasharray="4 1.500" />
        <path d="M1 15h8v7.500H1z" fill="#fff04a" stroke="#7c6c0a" strokeWidth="1.200" />
        <path d="M13 13.500l9 9h-9z" fill="#d42020" stroke="#7a0f0f" />
      </Res>
      <button aria-label="部件导航器" className="-mr-px ml-0.5 flex h-[46px] items-center justify-center border border-r-0 border-[#aaa] bg-white">
        <Svg box="0 0 24 24" className="size-6">
          <path d="M2 3v7q4 2.500 9 0V3" fill="#e6a8dc" stroke="#7d1c70" />
          <ellipse cx="6.500" cy="3" rx="4.500" ry="1.800" fill="#f6d3f0" stroke="#7d1c70" />
          <path d="M14 9.500h9" stroke="#111" strokeWidth="1.300" />
          <path d="M6 13v10M6 18h5" stroke="#1530c0" strokeWidth="1.500" />
          <circle cx="17" cy="18" r="4" fill="#fff" stroke="#7d1c70" strokeWidth="1.200" />
          <circle cx="17" cy="18" r="1.500" stroke="#7d1c70" strokeWidth="1.200" />
        </Svg>
      </button>
      <Res label="重用库" className="h-10">
        <path d="M1 7h6v15H1z" fill="#f29a28" stroke="#9a5508" />
        <path d="M8 7h6v15H8z" fill="#3fd04a" stroke="#157a1e" />
        <path d="M15 7h6v15h-6z" fill="#4d9cf0" stroke="#144b98" />
        <path d="M1 7l5-6h17l-2 6z" fill="#f4f8fc" stroke="#678" strokeWidth="0.800" />
        <path d="M4 6l4-5" stroke="#d07a10" strokeWidth="1.500" />
        <path d="M10 6l4-5" stroke="#2aa835" strokeWidth="1.500" />
        <path d="M21 7l2.500-5v14L21 22z" fill="#1d64be" />
        <path d="M3.500 8v14M10.500 8v14" stroke="#fff" strokeWidth="0.800" opacity=".7" />
        <path d="M17 9v12M19 9v12" stroke="#bfe0ff" strokeDasharray="1.500 1.500" />
      </Res>
      <Res label="信息中心" className="mt-3 h-[42px]">
        <path d="M10 2q12 1 12 14M10 6q8 1 8 10" stroke="#4f7ed6" strokeWidth="2.400" />
        <circle cx="8" cy="16" r="7.500" fill="#2c82e4" stroke="#1a4fa6" />
        <path d="M8 10.500v2.500M6 15h2.500v5M6 20.500h5" stroke="#fff" strokeWidth="2" />
      </Res>
      <Res label="网页浏览器" className="mt-3 h-[42px]">
        <path d="M3 1h12l6 6v16H3z" fill="#fff" stroke="#3360b8" strokeWidth="1.400" />
        <path d="M15 1v6h6" fill="#dfe8f8" stroke="#3360b8" />
        <circle cx="12" cy="15" r="5.500" fill="#3d7fd4" />
        <path d="M8 12q3-2 5 0l-2 4-3 1zM14 14l3-1v4l-3 2z" fill="#45b84c" />
      </Res>
      <Res label="历史记录" className="mt-3 h-[42px]">
        <circle cx="12" cy="12" r="10.500" fill="#5b6168" />
        <circle cx="12" cy="12" r="8.500" fill="#eaf1fb" stroke="#ccc" />
        <path d="M12 5v7.500h6" stroke="#111" strokeWidth="1.800" />
        <path d="M12 19v-1.500M5 12h1.500" stroke="#333" />
      </Res>
      <Res label="可视化模板">
        <path d="M2 1h8v4H2z" fill="#f03030" />
        <path d="M2 5h8v4H2z" fill="#f8c820" />
        <path d="M2 9h8v4H2z" fill="#5ade38" />
        <path d="M2 13h8v4H2z" fill="#25c8dc" />
        <path d="M2 17h8v5H2z" fill="#2360e0" />
        {wand}
      </Res>
      <Res label="可视化向导">
        <path d="M3 2h6v16H3z" fill="#4d96ea" stroke="#1f5cae" />
        <path d="M2 19l6 3 2-2" stroke="#e8bb2a" strokeWidth="2" />
        <path d="M10 6h13l-6 5h-5M12 14h8" stroke="#3b72c8" strokeWidth="1.400" />
        {wand}
      </Res>
      <Res label="角色" className="h-10">
        <path d="M10 5q4-5 9-2l4-1v3l-4 1" fill="#999" stroke="#555" />
        <path d="M15 5l-5 9" stroke="#777" strokeWidth="2" />
        <path d="M5 9l3 2v3l3 2 4-1 4 5-4 2-3-4-5 1-4-4-1-4 3 2z" fill="#d4d8dc" stroke="#555" />
        <path d="M2 19h7l2 4H3z" fill="#f29a28" />
        <path d="M12 22q4-2 7 0v1h-7z" fill="#889" />
      </Res>
    </aside>
  );
}

/* ---------- part navigator ---------- */

const Green = () => <Svg className="size-3.5"><path d="M1 8.500l3-2L6 10l6-8 3 .5L7 15H5z" fill="#19c42c" stroke="#0d7a1a" strokeWidth="0.600" /></Svg>;

const Expander = ({ open }: { open?: boolean }) => (
  <>
    <button aria-label={open ? "折叠" : "展开"} className="flex size-[9px] shrink-0 items-center justify-center border border-[#ccc] bg-white">
      <Svg box="0 0 5 5" className="size-[5px]"><path d={open ? "M0 2.500h5" : "M0 2.500h5M2.500 0v5"} stroke="#222" /></Svg>
    </button>
    <span className="w-1 shrink-0 border-b border-dotted border-[#999]" />
  </>
);

const treeIcons = {
  views: (
    <Svg>
      <path d="M7 1l6 2.500v7L7 13.500l-6-3v-7zM1 3.500L7 6l6-2.500M7 6v7.500M7 1v5M1 10.500l6-3.500 6 3.500" stroke="#1c8f5c" strokeWidth="1.200" />
      <path d="M9 11l5 4" stroke="#e03a1c" strokeWidth="1.800" />
    </Svg>
  ),
  camera: (
    <Svg>
      <path d="M2 5l9-3 2 10-11 3z" fill="#fff" stroke="#d8281c" strokeWidth="1.300" />
      <path d="M4 4l3-3 6 1" stroke="#d8281c" />
      <circle cx="7.500" cy="8.500" r="3.300" fill="#8fa4e8" stroke="#22307c" strokeWidth="1.400" />
      <path d="M11 6l3 2v5l-3-2z" fill="#38405c" />
    </Svg>
  ),
  folder: (
    <Svg>
      <path d="M1 4h5l1.500 2H13v2" fill="#f8df86" stroke="#8a6410" strokeWidth="1.100" />
      <path d="M1 4v10l3-6.500h12L13 14H1z" fill="#f4b72c" stroke="#8a6410" strokeWidth="1.100" />
    </Svg>
  ),
};

function Tree() {
  const cell = "border-r border-b border-[#e6e6e6]";
  return (
    <div className="mr-[9px] ml-1.5 border-2 border-[#dcdcdc] border-r-[#e8e8e8]">
      <table className="w-full table-fixed border-separate border-spacing-0">
        <colgroup><col className="w-[200px]" /><col className="w-[100px]" /><col /></colgroup>
        <thead>
          <tr className="h-[21px] bg-[#f0f0f0] text-left text-xs">
            <th className="border-r border-b border-[#ccc] pl-1.5 font-normal">
              <span className="flex items-center gap-[18px] leading-5">名称<Svg box="0 0 9 5" className="h-[5px] w-[9px]"><path d="M4.500 0L9 5H0z" fill="#111" /></Svg></span>
            </th>
            <th className="border-r border-b border-[#ccc] pl-1.5 leading-5 font-normal">最新</th>
            <th className="border-b border-[#ccc]" />
          </tr>
        </thead>
        <tbody className="text-xs">
          <tr className="h-5"><td className={cell}><div className="flex h-[19px] items-center pl-[5px]"><Expander /><span className="mr-1">{treeIcons.views}</span>模型视图</div></td><td className={cell} /><td className={cell} /></tr>
          <tr className="h-5 bg-[#f9f9f9]"><td className={cell}><div className="flex h-[19px] items-center pl-[5px]"><Expander /><span className="mx-0.5 flex items-center gap-0.5"><Green />{treeIcons.camera}</span>摄像机</div></td><td className={cell} /><td className={cell} /></tr>
          <tr className="h-5"><td className={cell}><div className="flex h-[19px] items-center pl-[5px]"><Expander open /><span className="mr-1">{treeIcons.folder}</span>模型历史记录</div></td><td className={cell} /><td className={cell} /></tr>
          <tr className="h-5 bg-[#f9f9f9]">
            <td className={cell}>
              <div className="flex h-[19px] items-center gap-[3px] pl-[29px]">
                <span className="h-2 w-2 shrink-0 border-b border-l border-dotted border-[#999]" />
                <label className="flex items-center gap-px font-bold">
                  <span className="relative flex size-3 items-center justify-center">
                    <input type="checkbox" defaultChecked className="absolute inset-0 size-3 appearance-none border border-black bg-white" />
                    <Svg className="relative size-2.5"><path d="M1 8.500l3-2L6 10l6-8 3 .5L7 15H5z" fill="#19c42c" stroke="#0d7a1a" /></Svg>
                  </span>
                  <Icon n="csysRed" />
                  <span className="pl-[3px]">基准坐标系 (0)</span>
                </label>
              </div>
            </td>
            <td className={cell}><div className="pl-[5px]"><Green /></div></td>
            <td className={cell} />
          </tr>
          <tr className="h-5"><td className={cell} /><td className={cell} /><td className={cell} /></tr>
          <tr className="h-2 bg-[#f9f9f9]"><td className="border-r border-[#e6e6e6]" /><td className="border-r border-[#e6e6e6]" /><td /></tr>
        </tbody>
      </table>
      <div className="flex h-[17px] items-center justify-between bg-[#f0f0f0] px-1">
        <Svg box="0 0 8 10" className="h-2.5 w-2"><path d="M6.500 1.500L2.500 5l4 3.500" stroke="#555" strokeWidth="1.600" /></Svg>
        <div className="mr-auto ml-[5px] h-[15px] w-[209px] bg-[#cdcdcd]" />
        <Svg box="0 0 8 10" className="h-2.5 w-2"><path d="M1.500 1.500l4 3.500-4 3.500" stroke="#555" strokeWidth="1.600" /></Svg>
      </div>
    </div>
  );
}

const SectionHead = ({ title }: { title: string }) => (
  <button className="flex h-7 w-full items-center justify-between pr-[5px] pb-1 pl-1.5 text-sm text-[#00607f]">
    {title}
    <Svg box="0 0 12 10" className="h-2.5 w-3"><path d="M1.500 9L6 3l4.500 6" stroke="#00607f" strokeWidth="2.400" /></Svg>
  </button>
);

function SquareButton({ label, strong, children }: { label: string; strong?: boolean; children: ReactNode }) {
  return (
    <button aria-label={label} className={clsx("flex size-8 items-center justify-center border", strong ? "border-[#999]" : "border-[#d0d0d0]")}>
      <Svg box="0 0 24 24" className="size-6">{children}</Svg>
    </button>
  );
}

function Navigator() {
  const dc = "border-r border-b border-[#e6e6e6] last:border-r-0";
  const detailHead = "border-r border-b border-[#ccc] pl-1.5 leading-5 font-normal last:border-r-0";
  return (
    <div className="flex w-[326px] shrink-0 flex-col bg-white">
      <div className="flex h-7 items-center justify-between pr-4 pl-2.5 text-xs">
        部件导航器
        <button aria-label="最大化面板" className="mt-0.5 h-[11px] w-3 border border-t-2 border-black" />
      </div>
      <Tree />
      <div className="mr-[9px] ml-1.5 h-[5px] border-y border-[#aaa] bg-[#d4d4d4]" />
      <div className="mr-[9px] ml-1.5 flex">
        <div className="min-w-0 flex-1 border-r border-l border-[#ddd]">
          <section className="pb-1.5">
            <SectionHead title="相关性" />
            <div className="flex gap-0.5 pr-1.5 pl-1.5">
              <div className="flex h-[138px] flex-1 flex-col border border-[#d4d4d4] p-px">
                {[0, 1, 2, 3, 4, 5, 6].map((i) => (
                  <div key={i} className="h-5 border-b border-[#e6e6e6] last:h-[14px] last:border-b-0 even:bg-[#f9f9f9]" />
                ))}
              </div>
              <div className="flex flex-col gap-0.5">
                <SquareButton label="查找" strong>
                  <circle cx="10" cy="9" r="8" fill="#f2f4f6" stroke="#555" strokeWidth="1.300" />
                  <path d="M14.500 14l3 3" stroke="#c9a23a" strokeWidth="3" />
                  <path d="M17 17l6 6" stroke="#333" strokeWidth="3" />
                  <path d="M18 17.500l5 5" stroke="#ccc" />
                </SquareButton>
                <SquareButton label="前进"><path d="M5 8.500h7V4l8 8-8 8v-4.500H5z" fill="#b9c4c6" stroke="#a3b0b2" /></SquareButton>
                <SquareButton label="后退"><path d="M19 8.500h-7V4l-8 8 8 8v-4.500h7z" fill="#b9c4c6" stroke="#a3b0b2" /></SquareButton>
                <SquareButton label="展开全部">
                  <path d="M3 1h6v6H3zM3 9h6v6H3zM3 17h6v6H3z" fill="#ccc" stroke="#aaa" />
                  <path d="M6 1v22M3 4h10M3 12h10M3 20h10" stroke="#999" />
                  <path d="M15 2.500h3q2 0 2 2M15 10.500h3q2 0 2 2M15 18.500h3q2 0 2 2" stroke="#c3a3a3" strokeWidth="1.600" />
                  <path d="M17 4.500h6l-3 3zM17 12.500h6l-3 3zM17 20.500h6l-3 3z" fill="#c3a3a3" />
                </SquareButton>
              </div>
            </div>
          </section>
          <section className="border-t-2 border-[#d8d8d8] pb-1.5">
            <SectionHead title="细节" />
            <div className="mr-1.5 ml-1.5 border border-[#d4d4d4] p-px">
              <table className="w-full table-fixed border-separate border-spacing-0">
                <colgroup><col className="w-16" /><col className="w-10" /><col className="w-[88px]" /><col /></colgroup>
                <thead>
                  <tr className="h-[21px] bg-[#f0f0f0] text-left text-xs">
                    <th className={detailHead}>参数</th>
                    <th className={detailHead}>值</th>
                    <th className={detailHead}><span className="flex items-center gap-[18px] leading-5">表达式<Svg box="0 0 9 5" className="h-[5px] w-[9px]"><path d="M4.500 0L9 5H0z" fill="#111" /></Svg></span></th>
                    <th className={detailHead} />
                  </tr>
                </thead>
                <tbody>
                  {[0, 1, 2, 3, 4].map((i) => (
                    <tr key={i} className="h-5 even:bg-[#f9f9f9]"><td className={dc} /><td className={dc} /><td className={dc} /><td className={dc} /></tr>
                  ))}
                  <tr className="h-3 bg-[#f9f9f9]"><td className="border-r border-[#e6e6e6]" /><td className="border-r border-[#e6e6e6]" /><td className="border-r border-[#e6e6e6]" /><td /></tr>
                </tbody>
              </table>
            </div>
          </section>
          <section className="border-t-2 border-[#d8d8d8]">
            <SectionHead title="预览" />
            <div className="mr-[22px] ml-[23px] h-[5px] border border-b-0 border-[#d4d4d4]" />
          </section>
        </div>
        <div className="flex w-[17px] flex-col items-center bg-[#f0f0f0]">
          <Svg box="0 0 10 8" className="my-[5px] h-2 w-2.5"><path d="M1.500 6L5 2l3.500 4" stroke="#555" strokeWidth="1.600" /></Svg>
          <div className="h-[228px] w-[15px] bg-[#cdcdcd]" />
          <Svg box="0 0 10 8" className="mt-auto mb-1 h-2 w-2.5"><path d="M1.500 2L5 6l3.500-4" stroke="#555" strokeWidth="1.600" /></Svg>
        </div>
      </div>
    </div>
  );
}

/* ---------- graphics window ---------- */

function Graphics() {
  return (
    <main className="flex min-w-0 flex-1 flex-col border-l-2 border-[#8a9499]">
      <div className="flex h-[23px] border-b-2 border-[#52a0b9] bg-white">
        <button className="flex h-[21px] w-24 items-center gap-1 bg-[#52a0b9] pl-[5px] text-xs text-white">
          <Svg><path d="M1 3l4-2 3 1v5l6 2v4l-5 2.500L1 12z" fill="#3c78ea" stroke="#1c44a8" /><path d="M2 4l3 1v7" stroke="#9fc0ff" /></Svg>
          lingjian
        </button>
      </div>
      <div className="flex flex-1 items-end border-r border-[#ccc] bg-linear-to-b from-[#b3b4b6] via-[#cfd0d2] via-50% to-[#e6e7e9] pb-4 pl-[42px]">
        <Svg box="0 0 36 40" className="h-10 w-9">
          <circle cx="5" cy="7" r="4.500" fill="#999" />
          <circle cx="4" cy="6" r="2" fill="#ddd" />
          <path d="M13 18l12-4 8 4-13 10z" fill="#ddd" stroke="#aaa" />
          <path d="M10 16l8 16" stroke="#0b2ccc" strokeWidth="1.500" />
          <path d="M14 23l4 9-1-8z" fill="#0b2ccc" stroke="#0b2ccc" />
          <path d="M17 32h6l-6 7h6" stroke="#4c64f0" strokeWidth="1.200" />
        </Svg>
      </div>
    </main>
  );
}

/* ---------- file dialog ---------- */

const files = [
  { name: "ug8.0安装包", date: "2023/6/29 5:42", type: "文件夹", size: "", dir: true },
  { name: "屏幕录象专家", date: "2023/6/29 5:43", type: "文件夹", size: "", dir: true },
  { name: "1", date: "2024/3/20 15:38", type: "文本文档", size: "1 KB", dir: false },
  { name: "2", date: "2024/3/20 15:35", type: "文本文档", size: "1 KB", dir: false },
  { name: "3", date: "2024/3/20 15:44", type: "文本文档", size: "1 KB", dir: false },
  { name: "4", date: "2024/3/20 15:41", type: "文本文档", size: "1 KB", dir: false },
];

const FolderGlyph = () => (
  <Svg box="0 0 14 16" className="h-4 w-3.5">
    <path d="M.5.500h11v9l1 1v5H.5z" fill="#ffe495" stroke="#efc64e" />
    <path d="M10.500 10v5.500" stroke="#efc64e" />
  </Svg>
);

const TextGlyph = () => (
  <Svg box="0 0 14 16" className="h-4 w-3.5">
    <path d="M1.500.500h8l3 3v12h-11z" fill="#fff" stroke="#999" />
    <path d="M9.500.500v3h3M3 3.500h5M3 5.500h8M3 7.500h8M3 9.500h8M3 11.500h8M3 13.500h8" stroke="#999" />
  </Svg>
);

const places: { name: string; art: ReactNode }[] = [
  {
    name: "快速访问",
    art: (
      <>
        <path d="M20 1l3 8 8 .5-6 6 2 9-8-4.500-8 4.500 3-9-7-6 8-.5z" fill="#3a9de6" stroke="#1c7cc8" />
        <path d="M7 2h12M9 5h9M1 16h9M3 20h7" stroke="#8cc6f0" />
      </>
    ),
  },
  { name: "桌面", art: (<><path d="M1.500 3.500h27v19h-27z" fill="#1ea0f6" stroke="#0f72bd" /><path d="M28 7L14 22h14z" fill="#3db0fb" /><path d="M2 22h26" stroke="#d8ecfa" strokeDasharray="2 18 1 1 1 1 1 1" /></>) },
  { name: "库", art: (<><path d="M1 1h12l2 2h14v22H1z" fill="#ffe38f" /><path d="M1 1h12v3H1z" fill="#f5c430" /><path d="M3 2h6v1.500H3z" fill="#fff" /><path d="M6 25v-8q0-3 3-3h12q3 0 3 3v8h-5v-6h-8v6z" fill="#34b0e4" /></>) },
  { name: "此电脑", art: (<><path d="M10 0l20 5v13l-20-4z" fill="#35a4ef" stroke="#7a8a96" /><path d="M10 14L24 3l6 2v13z" fill="#5bb8f6" opacity=".6" /><path d="M18 18l6 1v3h-8" stroke="#9aa4aa" fill="#ddd" /><path d="M1 21l8-2 16 4-7 4z" fill="#e4e6e8" stroke="#b0b4b8" /></>) },
  { name: "网络", art: (<><circle cx="19" cy="10" r="10" fill="#3b86b0" /><path d="M13 3q4-3 7-1l-2 5-5 1zM22 6l5-1 2 6-4 5-3-4z" fill="#b9d9e2" /><path d="M2 8l18 4v13L2 21z" fill="#35a4ef" stroke="#7a8a96" /><path d="M2 21l14-10 4 1v13z" fill="#62bdf8" opacity=".6" /><path d="M8 23l6 1v2l4 2" stroke="#9aa4aa" strokeWidth="2" /></>) },
];

const SunkenArrow = () => (
  <span className="pointer-events-none absolute top-0.5 right-0.5 bottom-0.5 flex w-4 items-center justify-center border border-t-white border-r-[#696969] border-b-[#696969] border-l-white bg-[#f0f0f0]">
    <Svg box="0 0 7 4" className="h-1 w-[7px]"><path d="M0 0h7L3.500 4z" fill="#000" /></Svg>
  </span>
);

const sunken = "border-2 border-t-[#808080] border-l-[#808080] border-r-[#e3e3e3] border-b-[#e3e3e3]";
const mono = "font-['DejaVu_Sans_Mono'] text-[10px]";
const raised = "h-[23px] w-[90px] border-2 border-t-white border-l-white border-r-[#8a8a8a] border-b-[#8a8a8a] bg-[#f0f0f0]";

function FileTable() {
  const line = "border-r border-[#e6f0fb]";
  return (
    <div className="relative flex-1 bg-white">
      <Svg box="0 0 8 4" className="absolute top-0.5 left-[149px] h-1 w-2"><path d="M.5 4L4 .5 7.500 4" stroke="#555" /></Svg>
      <table className="w-full table-fixed border-separate border-spacing-0 text-xs">
        <colgroup><col className="w-1" /><col className="w-[302px]" /><col className="w-[135px]" /><col className="w-[135px]" /><col className="w-[90px]" /><col /></colgroup>
        <thead>
          <tr className="h-6 text-left">
            <th />
            {["名称", "修改日期", "类型", "大小"].map((h, i) => (
              <th key={h} className={clsx("border-r border-[#e0e0e0] leading-6 font-normal", i === 0 ? "pl-0.5" : "pl-1.5")}>{h}</th>
            ))}
            <th />
          </tr>
        </thead>
        <tbody>
          {files.map((f) => {
            const on = f.name === "1";
            const bg = on && "bg-[#d9d9d9]";
            return (
              <tr key={f.name} className="h-[21px]">
                <td />
                <td className={clsx(line, bg)}><span className="flex items-center gap-[3px] pl-[5px] leading-5">{f.dir ? <FolderGlyph /> : <TextGlyph />}{f.name}</span></td>
                <td className={clsx(line, bg, "pl-1.5 leading-5")}>{f.date}</td>
                <td className={clsx(line, bg, "pl-1.5 leading-5")}>{f.type}</td>
                <td className={clsx(line, bg, "pr-[7px] text-right leading-5")}>{f.size}</td>
                <td />
              </tr>
            );
          })}
          <tr className="h-[211px]"><td /><td className={line} /><td className={line} /><td className={line} /><td className={line} /><td /></tr>
        </tbody>
      </table>
      <p className="absolute top-[164px] left-[201px] font-['DejaVu_Sans','Noto_Sans_CJK_SC',sans-serif] text-[65px] leading-[105px] whitespace-nowrap">
        文件-导入-文件
        <br />
        中的点
      </p>
    </div>
  );
}

function Dialog() {
  return (
    <div role="dialog" aria-label="从文件导入点" className="absolute top-[146px] left-[418px] flex w-[814px] flex-col border border-[#1883d7] bg-[#f0f0f0] text-xs text-black shadow-[0_6px_22px_4px_rgba(0,0,0,0.35)]">
      <div className="flex h-[30px] items-center bg-white pr-2.5 pl-2">
        <Svg className="mr-[5px] size-4">
          <circle cx="8" cy="8" r="6.500" fill="#3fa9e8" />
          <path d="M4 9q4 6 9 1" stroke="#1c5fae" strokeWidth="2" />
          <path d="M1 15q11-1 14-10-2 9-10 11z" fill="#f0a822" />
          <path d="M2 0l6 1 2 7-3-2z" fill="#d21f2c" stroke="#8a0f1a" strokeWidth="0.600" />
        </Svg>
        <h2 className="flex-1">从文件导入点</h2>
        <button aria-label="关闭对话框"><Svg box="0 0 10 10" className="size-2.5"><path d="M0 0l10 10M10 0L0 10" stroke="#111" strokeWidth="1.200" /></Svg></button>
      </div>
      <div className="flex h-9 items-center pl-[19px]">
        <label htmlFor="lookin" className="w-20">查找范围<span className={mono}>(I):</span></label>
        <div className="relative w-[260px]">
          <select id="lookin" className={clsx("h-[21px] w-full appearance-none bg-white pl-[23px]", sunken)}>
            <option>硕士实验课相关资料</option>
          </select>
          <span className="pointer-events-none absolute top-[3px] left-[7px]"><FolderGlyph /></span>
          <SunkenArrow />
        </div>
        <div className="flex items-center gap-[7px] pt-px pl-4">
          <button aria-label="返回"><Svg><path d="M2 8l5-4.500v3h7v3H7v3z" fill="#9c9c9c" /></Svg></button>
          <button aria-label="上一级"><Svg><path d="M.5 4.500l2-2h4l2 2h7v9H.5z" fill="#ffffa8" stroke="#111" /><path d="M6 7v4h5M4 8.500L6 6.500l2 2" stroke="#111" strokeWidth="1.200" /></Svg></button>
          <button aria-label="新建文件夹"><Svg><path d="M.5 6.500L2 5h3l2 2h5v7.500H.5z" fill="#ffffa8" stroke="#111" /><path d="M12.500 0v2M12.500 5v3M9 4h2M14 4h2M10 1.500l1 1M15 1.500l-1 1M15 7l-1-1M10 7l1-1" stroke="#222" /></Svg></button>
          <button aria-label="查看菜单" className="flex items-center gap-0.5">
            <Svg><path d="M.5 2h15v12.500H.5z" fill="#fff" stroke="#111" /><path d="M1 3h14" stroke="#0b4aa8" strokeWidth="2.500" /><path d="M3 7h3M7.500 7h3M12 7h2M3 9.500h3M7.500 9.500h3M12 9.500h2M3 12h3M7.500 12h3M12 12h2" stroke="#224" strokeWidth="1.200" /></Svg>
            <Svg box="0 0 9 5" className="h-[5px] w-[9px]"><path d="M0 0h9L4.500 5z" fill="#000" /></Svg>
          </button>
        </div>
      </div>
      <div className="flex pr-1.5">
        <nav className="w-[99px] pt-0.5">
          {places.map((p) => (
            <button key={p.name} className="flex h-[51px] w-full flex-col items-center">
              <Svg box="0 0 30 28" className="h-7 w-[30px]">{p.art}</Svg>
              <span className="leading-[18px]">{p.name}</span>
            </button>
          ))}
        </nav>
        <FileTable />
      </div>
      <form className="grid grid-cols-[95px_1fr_90px] items-center gap-y-1 pt-2 pr-1.5 pl-[100px]">
        <label htmlFor="fname">文件名<span className={mono}>(N):</span></label>
        <div className="relative mr-5">
          <input id="fname" defaultValue="1" className={clsx("block h-[21px] w-full bg-white pl-px font-['DejaVu_Sans_Mono'] text-[10px]", sunken)} />
          <SunkenArrow />
        </div>
        <button type="button" className={clsx(raised, mono, "outline outline-[#555] -outline-offset-1")}>OK</button>
        <label htmlFor="ftype">文件类型<span className={mono}>(T):</span></label>
        <div className="relative mr-5">
          <select id="ftype" className={clsx("block h-5 w-full appearance-none bg-[#0078d7] pl-px font-['Liberation_Mono','Noto_Sans_CJK_SC',monospace] text-[11px] leading-4 text-white", sunken)}>
            <option>文本文件 (*.txt)</option>
          </select>
          <SunkenArrow />
        </div>
        <button type="button" className={raised}>取消</button>
      </form>
      <div className="flex items-end justify-between pt-5 pl-1.5">
        <fieldset className="mb-px h-[68px] w-[86px] border border-[#a0a0a0] px-2">
          <legend className="leading-4">目标坐标系</legend>
          <div className="flex flex-col pt-[5px]">
            <label className="flex h-[19px] items-center gap-1.5">
              <input type="radio" name="cs" defaultChecked className="size-[11px] shrink-0 appearance-none rounded-full border border-[#888] bg-white bg-[radial-gradient(circle,#000_2px,transparent_2.5px)]" />
              绝对
            </label>
            <label className="flex h-[19px] items-center gap-1.5">
              <input type="radio" name="cs" className="size-[11px] shrink-0 appearance-none rounded-full border border-[#888] bg-white" />
              <span className={mono}>WCS</span>
            </label>
          </div>
        </fieldset>
        <Svg box="0 0 11 11" className="size-[11px]"><path d="M0 11L11 0M4 11l7-7M8 11l3-3" stroke="#888" strokeWidth="1.200" /></Svg>
      </div>
      {/* freehand annotation around the file type field */}
      <svg viewBox="0 0 210 160" className="pointer-events-none absolute top-[374px] left-[141px] h-40 w-[210px]" fill="none" aria-hidden="true">
        <path
          d="M47 10C43 11 38 7 26 6C20 6 15 8 13 8C9 12 9 20 9 30C7 48 8 70 9 85C11 105 14 120 18 127C25 136 38 148 45 151C56 156 84 159 105 165C120 166 140 164 153 162C170 158 180 148 193 136C200 124 203 112 203 100C204 84 196 78 187 69C175 64 150 58 133 52C126 47 118 45 98 44C90 41 84 37 77 36C70 33 62 29 52 28L47 24"
          stroke="#f80c0c"
          strokeWidth="2"
          strokeLinecap="round"
          transform="scale(1 .94) translate(0 1)"
        />
      </svg>
    </div>
  );
}

export default function App() {
  return (
    <div className="relative flex min-h-screen flex-col bg-[#001f4a] pt-1 pb-0.5 pl-[5px] font-['Noto_Sans','Noto_Sans_CJK_SC',sans-serif] text-[11px] text-[#1a1a1a]">
      <div className="flex flex-1 flex-col border-t border-l border-[#a8a8a8] bg-white">
        <div className="flex flex-1 flex-col px-[3px]">
          <TitleBar />
          <TabBar />
          <Ribbon />
          <SelectionBar />
          <div className="flex flex-1">
            <ResourceBar />
            <Navigator />
            <Graphics />
          </div>
          <footer className="flex h-[22px] items-center border-t border-[#aaa] pl-[3px] font-bold">
            <span className="w-[630px]">选择要导入的 ASCII 点数据文件</span>
            <span className="flex-1">构建文件选择对话框</span>
            <Icon n="flagOff" />
            <Icon n="fullscreen" className="mr-[55px] ml-1 size-4" />
          </footer>
        </div>
        <div className="h-2 border-y border-[#aaa] bg-[#52a0b9]" />
      </div>
      <Dialog />
    </div>
  );
}
